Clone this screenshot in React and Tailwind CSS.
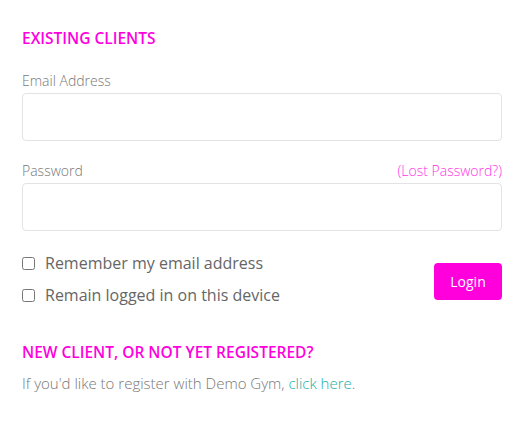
import React from 'react';

const App = () => {
  return (
    <div className="min-h-screen bg-white px-[22px] pt-[26px] font-['Open_Sans',sans-serif] text-[#666]">
      <h2 className="text-[15.5px] font-semibold leading-6 text-[#ff00dd]">EXISTING CLIENTS</h2>

      <form className="mt-[21px]">
        <label className="block text-[14px] font-light leading-5 text-[#777]">Email Address</label>
        <input type="email" className="mt-[2px] block h-[48px] w-full rounded-[4px] border border-[#e3e3e3] bg-white outline-none" />

        <div className="mt-[20px] flex items-end justify-between">
          <label className="block text-[14px] font-light leading-5 text-[#777]">Password</label>
          <a href="#" className="text-[14px] font-light leading-5 text-[#ff33e6]">(Lost Password?)</a>
        </div>
        <input type="password" className="mt-[2px] block h-[48px] w-full rounded-[4px] border border-[#e3e3e3] bg-white outline-none" />

        <div className="mt-[20px] flex items-center justify-between">
          <div className="flex flex-col gap-[8px]">
            <label className="flex items-center gap-[10px] text-[16px] leading-6 text-[#666]">
              <input type="checkbox" className="h-[13px] w-[13px]" />
              Remember my email address
            </label>
            <label className="flex items-center gap-[10px] text-[16px] leading-6 text-[#666]">
              <input type="checkbox" className="h-[13px] w-[13px]" />
              Remain logged in on this device
            </label>
          </div>
          <button type="button" className="mt-[5px] h-[37px] w-[68px] rounded-[4px] bg-[#ff00dd] text-[14px] font-medium text-white">
            Login
          </button>
        </div>
      </form>

      <h2 className="mt-[33px] text-[15.5px] font-semibold leading-6 text-[#ff00dd]">NEW CLIENT, OR NOT YET REGISTERED?</h2>
      <p className="mt-[7px] text-[15px] font-light leading-6 text-[#777]">
        If you'd like to register with Demo Gym, <a href="#" className="text-[#1aaea6]">click here</a>.
      </p>
    </div>
  );
};

export default App;
